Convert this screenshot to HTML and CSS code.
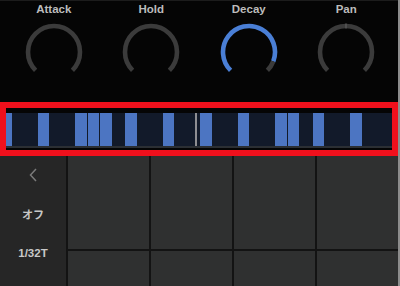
FILE: index.html
```html
<!DOCTYPE html>
<html lang="ja">
<head>
<meta charset="utf-8">
<link rel="stylesheet" href="styles.css">
</head>
<body>
<div class="screen">
  <div class="knobs">
    <div class="knob">
      <span class="label">Attack</span>
      <svg class="dial" width="60" height="60" viewBox="0 0 60 60">
        <path class="track" d="M11.62 48.38 A26 26 0 1 1 48.38 48.38"/>
      </svg>
    </div>
    <div class="knob">
      <span class="label">Hold</span>
      <svg class="dial" width="60" height="60" viewBox="0 0 60 60">
        <path class="track" d="M11.62 48.38 A26 26 0 1 1 48.38 48.38"/>
      </svg>
    </div>
    <div class="knob">
      <span class="label">Decay</span>
      <svg class="dial" width="60" height="60" viewBox="0 0 60 60">
        <path class="value" d="M11.62 48.38 A26 26 0 1 1 54.27 39.32"/>
        <path class="track" d="M54.27 39.32 A26 26 0 0 1 48.38 48.38"/>
      </svg>
    </div>
    <div class="knob">
      <span class="label">Pan</span>
      <svg class="dial" width="60" height="60" viewBox="0 0 60 60">
        <path class="track" d="M11.62 48.38 A26 26 0 1 1 48.38 48.38"/>
        <line class="center-mark" x1="30" y1="1.6" x2="30" y2="6.4"/>
      </svg>
    </div>
  </div>

  <div class="seq">
    <div class="bar">
      <div class="step on"></div><div class="step"></div><div class="step"></div><div class="step on"></div>
      <div class="step"></div><div class="step"></div><div class="step on"></div><div class="step on"></div>
      <div class="step on"></div><div class="step"></div><div class="step on"></div><div class="step"></div>
      <div class="step"></div><div class="step on"></div><div class="step"></div><div class="step"></div>
      <div class="step on"></div><div class="step"></div><div class="step"></div><div class="step on"></div>
      <div class="step"></div><div class="step"></div><div class="step on"></div><div class="step on"></div>
      <div class="step"></div><div class="step on"></div><div class="step"></div><div class="step"></div>
      <div class="step on"></div><div class="step"></div><div class="step"></div><div class="step"></div>
      <div class="playhead"></div>
    </div>
    <div class="bar-line"></div>
  </div>

  <div class="bottom">
    <div class="side">
      <div class="side-item">
        <svg width="10" height="14" viewBox="0 0 10 14"><path class="chev" d="M8 1 L2.5 7 L8 13"/></svg>
      </div>
      <div class="side-item"><span class="side-text jp">オフ</span></div>
      <div class="side-item"><span class="side-text">1/32T</span></div>
    </div>
    <div class="pads">
      <div class="pad"></div><div class="pad"></div><div class="pad"></div><div class="pad"></div>
      <div class="pad"></div><div class="pad"></div><div class="pad"></div><div class="pad"></div>
    </div>
  </div>

  <div class="highlight"></div>
  <div class="edge"></div>
</div>
</body>
</html>
```
FILE: styles.css
```css
* { box-sizing: border-box; }
html, body { margin: 0; padding: 0; background: #050505; }
.screen {
  position: relative;
  width: 400px;
  height: 286px;
  overflow: hidden;
  background: #050505;
  font-family: "Liberation Sans", Arial, sans-serif;
}
.knobs {
  height: 102px;
  display: grid;
  grid-template-columns: repeat(4, 97.5px);
  padding: 1px 5px 0;
  border-top: 1px solid #1c1c1c;
}
.knob {
  display: flex;
  flex-direction: column;
  align-items: center;
}
.label {
  font-weight: 700;
  font-size: 11.5px;
  line-height: 14px;
  color: #bcbcbc;
}
.dial { margin-top: 6px; display: block; }
.track, .value { fill: none; stroke-width: 4.6; }
.track { stroke: #3b3b3b; }
.value { stroke: #4a7fd6; }
.center-mark { stroke: #5a5a5a; stroke-width: 1.4; }

.seq {
  height: 48px;
  padding-top: 11px;
}
.bar {
  position: relative;
  height: 33px;
  display: grid;
  grid-template-columns: repeat(32, 1fr);
  background: #121a2a;
}
.step { margin-right: 0.9px; }
.step.on { background: #4c75c2; }
.playhead {
  position: absolute;
  left: 194.5px;
  top: 0;
  width: 2px;
  height: 100%;
  background: #8e8e92;
}
.bar-line { height: 2px; background: #2b2f34; }

.bottom {
  height: 136px;
  width: 398px;
  display: flex;
}
.side {
  width: 66px;
  background: #262626;
  padding-top: 5px;
  display: flex;
  flex-direction: column;
}
.side-item {
  height: 39px;
  display: flex;
  align-items: center;
  justify-content: center;
}
.chev { fill: none; stroke: #7a7a7a; stroke-width: 1.5; }
.side-text {
  font-weight: 700;
  font-size: 11.5px;
  color: #c8c8c8;
}
.side-text.jp {
  font-family: "Noto Sans CJK JP", "Liberation Sans", sans-serif;
  font-size: 11px;
}
.pads {
  flex: 1;
  display: grid;
  grid-template-columns: repeat(4, 1fr);
  grid-template-rows: 99px 1fr;
  gap: 2px;
  padding-left: 2px;
  background: #131313;
}
.pad { background: #2f3030; }

.highlight {
  position: absolute;
  left: 0;
  top: 102px;
  width: 398px;
  height: 54px;
  border: 6px solid #f0101c;
}
.edge {
  position: absolute;
  right: 0;
  top: 0;
  width: 2px;
  height: 100%;
  background: #8c8c8c;
}
```
